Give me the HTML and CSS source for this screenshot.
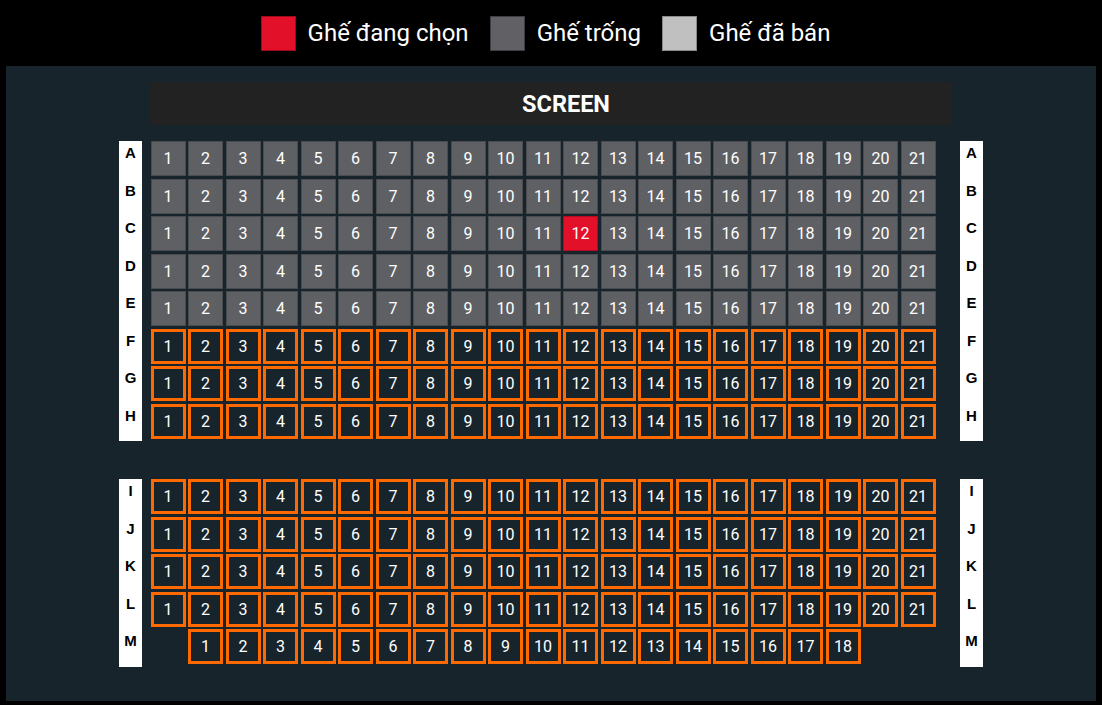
FILE: index.html
```html
<!DOCTYPE html>
<html lang="vi">
<head>
<meta charset="utf-8">
<title>Chọn ghế</title>
<link rel="stylesheet" href="styles.css">
</head>
<body>
<header class="legend">
  <div class="legend-item"><span class="swatch swatch-sel"></span><span>Ghế đang chọn</span></div>
  <div class="legend-item"><span class="swatch swatch-free"></span><span>Ghế trống</span></div>
  <div class="legend-item"><span class="swatch swatch-sold"></span><span>Ghế đã bán</span></div>
</header>
<main class="panel">
  <div class="screen">SCREEN</div>

  <div class="block">
    <div class="labels"><div class="lab">A</div><div class="lab">B</div><div class="lab">C</div><div class="lab">D</div><div class="lab">E</div><div class="lab">F</div><div class="lab">G</div><div class="lab">H</div></div>
    <div class="seats">
      <span class="s g">1</span><span class="s g">2</span><span class="s g">3</span><span class="s g">4</span><span class="s g">5</span><span class="s g">6</span><span class="s g">7</span><span class="s g">8</span><span class="s g">9</span><span class="s g">10</span><span class="s g">11</span><span class="s g">12</span><span class="s g">13</span><span class="s g">14</span><span class="s g">15</span><span class="s g">16</span><span class="s g">17</span><span class="s g">18</span><span class="s g">19</span><span class="s g">20</span><span class="s g">21</span>
      <span class="s g">1</span><span class="s g">2</span><span class="s g">3</span><span class="s g">4</span><span class="s g">5</span><span class="s g">6</span><span class="s g">7</span><span class="s g">8</span><span class="s g">9</span><span class="s g">10</span><span class="s g">11</span><span class="s g">12</span><span class="s g">13</span><span class="s g">14</span><span class="s g">15</span><span class="s g">16</span><span class="s g">17</span><span class="s g">18</span><span class="s g">19</span><span class="s g">20</span><span class="s g">21</span>
      <span class="s g">1</span><span class="s g">2</span><span class="s g">3</span><span class="s g">4</span><span class="s g">5</span><span class="s g">6</span><span class="s g">7</span><span class="s g">8</span><span class="s g">9</span><span class="s g">10</span><span class="s g">11</span><span class="s sel">12</span><span class="s g">13</span><span class="s g">14</span><span class="s g">15</span><span class="s g">16</span><span class="s g">17</span><span class="s g">18</span><span class="s g">19</span><span class="s g">20</span><span class="s g">21</span>
      <span class="s g">1</span><span class="s g">2</span><span class="s g">3</span><span class="s g">4</span><span class="s g">5</span><span class="s g">6</span><span class="s g">7</span><span class="s g">8</span><span class="s g">9</span><span class="s g">10</span><span class="s g">11</span><span class="s g">12</span><span class="s g">13</span><span class="s g">14</span><span class="s g">15</span><span class="s g">16</span><span class="s g">17</span><span class="s g">18</span><span class="s g">19</span><span class="s g">20</span><span class="s g">21</span>
      <span class="s g">1</span><span class="s g">2</span><span class="s g">3</span><span class="s g">4</span><span class="s g">5</span><span class="s g">6</span><span class="s g">7</span><span class="s g">8</span><span class="s g">9</span><span class="s g">10</span><span class="s g">11</span><span class="s g">12</span><span class="s g">13</span><span class="s g">14</span><span class="s g">15</span><span class="s g">16</span><span class="s g">17</span><span class="s g">18</span><span class="s g">19</span><span class="s g">20</span><span class="s g">21</span>
      <span class="s o">1</span><span class="s o">2</span><span class="s o">3</span><span class="s o">4</span><span class="s o">5</span><span class="s o">6</span><span class="s o">7</span><span class="s o">8</span><span class="s o">9</span><span class="s o">10</span><span class="s o">11</span><span class="s o">12</span><span class="s o">13</span><span class="s o">14</span><span class="s o">15</span><span class="s o">16</span><span class="s o">17</span><span class="s o">18</span><span class="s o">19</span><span class="s o">20</span><span class="s o">21</span>
      <span class="s o">1</span><span class="s o">2</span><span class="s o">3</span><span class="s o">4</span><span class="s o">5</span><span class="s o">6</span><span class="s o">7</span><span class="s o">8</span><span class="s o">9</span><span class="s o">10</span><span class="s o">11</span><span class="s o">12</span><span class="s o">13</span><span class="s o">14</span><span class="s o">15</span><span class="s o">16</span><span class="s o">17</span><span class="s o">18</span><span class="s o">19</span><span class="s o">20</span><span class="s o">21</span>
      <span class="s o">1</span><span class="s o">2</span><span class="s o">3</span><span class="s o">4</span><span class="s o">5</span><span class="s o">6</span><span class="s o">7</span><span class="s o">8</span><span class="s o">9</span><span class="s o">10</span><span class="s o">11</span><span class="s o">12</span><span class="s o">13</span><span class="s o">14</span><span class="s o">15</span><span class="s o">16</span><span class="s o">17</span><span class="s o">18</span><span class="s o">19</span><span class="s o">20</span><span class="s o">21</span>
    </div>
    <div class="labels right"><div class="lab">A</div><div class="lab">B</div><div class="lab">C</div><div class="lab">D</div><div class="lab">E</div><div class="lab">F</div><div class="lab">G</div><div class="lab">H</div></div>
  </div>

  <div class="block block-2">
    <div class="labels"><div class="lab">I</div><div class="lab">J</div><div class="lab">K</div><div class="lab">L</div><div class="lab">M</div></div>
    <div class="seats">
      <span class="s o">1</span><span class="s o">2</span><span class="s o">3</span><span class="s o">4</span><span class="s o">5</span><span class="s o">6</span><span class="s o">7</span><span class="s o">8</span><span class="s o">9</span><span class="s o">10</span><span class="s o">11</span><span class="s o">12</span><span class="s o">13</span><span class="s o">14</span><span class="s o">15</span><span class="s o">16</span><span class="s o">17</span><span class="s o">18</span><span class="s o">19</span><span class="s o">20</span><span class="s o">21</span>
      <span class="s o">1</span><span class="s o">2</span><span class="s o">3</span><span class="s o">4</span><span class="s o">5</span><span class="s o">6</span><span class="s o">7</span><span class="s o">8</span><span class="s o">9</span><span class="s o">10</span><span class="s o">11</span><span class="s o">12</span><span class="s o">13</span><span class="s o">14</span><span class="s o">15</span><span class="s o">16</span><span class="s o">17</span><span class="s o">18</span><span class="s o">19</span><span class="s o">20</span><span class="s o">21</span>
      <span class="s o">1</span><span class="s o">2</span><span class="s o">3</span><span class="s o">4</span><span class="s o">5</span><span class="s o">6</span><span class="s o">7</span><span class="s o">8</span><span class="s o">9</span><span class="s o">10</span><span class="s o">11</span><span class="s o">12</span><span class="s o">13</span><span class="s o">14</span><span class="s o">15</span><span class="s o">16</span><span class="s o">17</span><span class="s o">18</span><span class="s o">19</span><span class="s o">20</span><span class="s o">21</span>
      <span class="s o">1</span><span class="s o">2</span><span class="s o">3</span><span class="s o">4</span><span class="s o">5</span><span class="s o">6</span><span class="s o">7</span><span class="s o">8</span><span class="s o">9</span><span class="s o">10</span><span class="s o">11</span><span class="s o">12</span><span class="s o">13</span><span class="s o">14</span><span class="s o">15</span><span class="s o">16</span><span class="s o">17</span><span class="s o">18</span><span class="s o">19</span><span class="s o">20</span><span class="s o">21</span>
      <span class="s o m-first">1</span><span class="s o">2</span><span class="s o">3</span><span class="s o">4</span><span class="s o">5</span><span class="s o">6</span><span class="s o">7</span><span class="s o">8</span><span class="s o">9</span><span class="s o">10</span><span class="s o">11</span><span class="s o">12</span><span class="s o">13</span><span class="s o">14</span><span class="s o">15</span><span class="s o">16</span><span class="s o">17</span><span class="s o">18</span>
    </div>
    <div class="labels right"><div class="lab">I</div><div class="lab">J</div><div class="lab">K</div><div class="lab">L</div><div class="lab">M</div></div>
  </div>
</main>
</body>
</html>
```

FILE: styles.css
```css
* { box-sizing: border-box; }

html, body {
  margin: 0;
  padding: 0;
  background: #000;
}

body {
  width: 1102px;
  height: 705px;
  overflow: hidden;
  font-family: Roboto, "Noto Sans", sans-serif;
  color: #fff;
}

.legend {
  height: 66px;
  display: flex;
  justify-content: center;
  align-items: center;
  gap: 21px;
  padding-right: 11px;
}

.legend-item {
  display: flex;
  align-items: center;
  gap: 12px;
  font-size: 24px;
  line-height: 28px;
}

.swatch {
  width: 35px;
  height: 35px;
  border: 1px solid;
}
.swatch-sel { background: #e3102a; border-color: #9c0a1c; }
.swatch-free { background: #606065; border-color: #3e3e42; }
.swatch-sold { background: #c0c0c0; border-color: #8a8a8a; }

.panel {
  margin: 0 6px;
  height: 635px;
  background: #17242c;
  padding-top: 16px;
}

.screen {
  width: 802px;
  height: 43px;
  margin: 0 auto 16px;
  padding-left: 30px;
  background: #222222;
  border-radius: 3px;
  display: flex;
  align-items: center;
  justify-content: center;
  font-weight: 700;
  font-size: 23.5px;
}

.block {
  display: flex;
  align-items: flex-start;
  width: 864px;
  margin: 0 auto;
}

.block-2 { margin-top: 38px; }

.labels {
  width: 23px;
  background: #fff;
  color: #000;
  display: flex;
  flex-direction: column;
}
.labels.right { margin-left: 24.5px; }

.lab {
  height: 37.5px;
  line-height: 24px;
  text-align: center;
  font-family: "Liberation Sans", Arial, sans-serif;
  font-weight: 700;
  font-size: 15px;
}

.seats {
  margin-left: 8.5px;
  display: grid;
  grid-template-columns: repeat(21, 35px);
  grid-auto-rows: 35px;
  gap: 2.5px;
}

.s {
  display: flex;
  align-items: center;
  justify-content: center;
  font-size: 16px;
  color: #fff;
}

.g {
  background: #5f6064;
  border: 1px solid #4a4b4f;
}

.sel {
  background: #e3102a;
  border: 1px solid #b30c20;
}

.o {
  border: 3px solid #ff6a00;
  background: #17242c;
}

.m-first { grid-column-start: 2; }
```
